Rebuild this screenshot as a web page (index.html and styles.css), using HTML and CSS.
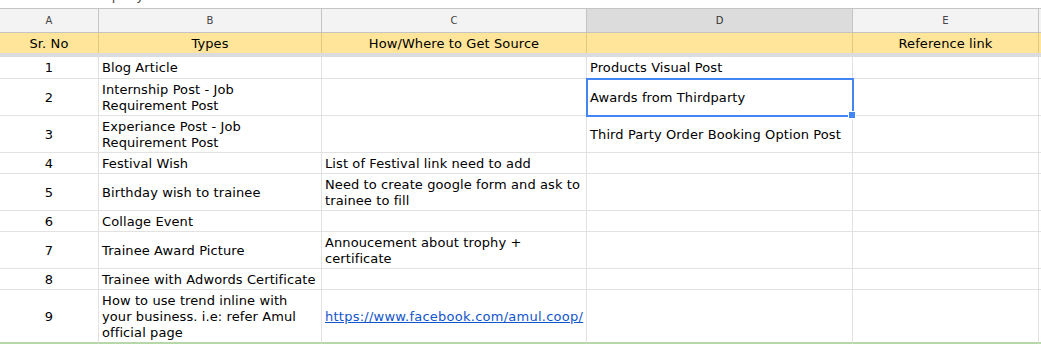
FILE: index.html
```html
<!doctype html>
<html>
  <head>
    <meta charset="UTF-8" />
    <title>Content Plan</title>
    <link rel="stylesheet" href="styles.css">
  </head>
  <body>
    <div class="title-strip"><span>Company</span></div>

    <div class="sheet">
      <!-- column letters -->
      <div class="col-head">A</div>
      <div class="col-head">B</div>
      <div class="col-head">C</div>
      <div class="col-head active">D</div>
      <div class="col-head">E</div>
      <div class="col-head last"></div>

      <!-- frozen header row -->
      <div class="hd">Sr. No</div>
      <div class="hd">Types</div>
      <div class="hd">How/Where to Get Source</div>
      <div class="hd"></div>
      <div class="hd">Reference link</div>
      <div class="hd last"></div>

      <div class="freeze"></div>

      <div class="c num r1">1</div>
      <div class="c r1">Blog Article</div>
      <div class="c r1"></div>
      <div class="c r1">Products Visual Post</div>
      <div class="c r1"></div>
      <div class="c r1 last"></div>

      <div class="c num r2">2</div>
      <div class="c r2">Internship Post - Job Requirement Post</div>
      <div class="c r2"></div>
      <div class="c r2 selected">Awards from Thirdparty<span class="handle"></span></div>
      <div class="c r2"></div>
      <div class="c r2 last"></div>

      <div class="c num r2">3</div>
      <div class="c r2">Experiance Post - Job Requirement Post</div>
      <div class="c r2"></div>
      <div class="c r2">Third Party Order Booking Option Post</div>
      <div class="c r2"></div>
      <div class="c r2 last"></div>

      <div class="c num r0">4</div>
      <div class="c r0">Festival Wish</div>
      <div class="c r0">List of Festival link need to add</div>
      <div class="c r0"></div>
      <div class="c r0"></div>
      <div class="c r0 last"></div>

      <div class="c num r2">5</div>
      <div class="c r2">Birthday wish to trainee</div>
      <div class="c r2">Need to create google form and ask to trainee to fill</div>
      <div class="c r2"></div>
      <div class="c r2"></div>
      <div class="c r2 last"></div>

      <div class="c num r0">6</div>
      <div class="c r0">Collage Event</div>
      <div class="c r0"></div>
      <div class="c r0"></div>
      <div class="c r0"></div>
      <div class="c r0 last"></div>

      <div class="c num r2">7</div>
      <div class="c r2">Trainee Award Picture</div>
      <div class="c r2">Annoucement about trophy + certificate</div>
      <div class="c r2"></div>
      <div class="c r2"></div>
      <div class="c r2 last"></div>

      <div class="c num r0">8</div>
      <div class="c r0">Trainee with Adwords Certificate</div>
      <div class="c r0"></div>
      <div class="c r0"></div>
      <div class="c r0"></div>
      <div class="c r0 last"></div>

      <div class="c num r3 end">9</div>
      <div class="c r3 end">How to use trend inline with your business. i.e: refer Amul official page</div>
      <div class="c r3 end"><a href="#">https://www.facebook.com/amul.coop/</a></div>
      <div class="c r3 end"></div>
      <div class="c r3 end"></div>
      <div class="c r3 end last"></div>
    </div>
  </body>
</html>
```

FILE: styles.css
```css
html,
body {
  margin: 0;
  background: #fff;
  font-family: "DejaVu Sans", Verdana, sans-serif;
  color: #000;
}
.title-strip {
  height: 8px;
  overflow: hidden;
  padding-left: 82px;
  font-size: 13px;
  color: #444;
}
.title-strip span {
  display: block;
  margin-top: -11px;
  line-height: 14px;
}
.sheet {
  display: grid;
  grid-template-columns: 99px 223px 265px 266px 186px 1fr;
  border-top: 1px solid #c4c4c4;
}
.col-head {
  height: 23px;
  background: #f3f3f3;
  border-right: 1px solid #c4c4c4;
  border-bottom: 1px solid #c4c4c4;
  font-size: 10px;
  color: #444;
  display: flex;
  align-items: center;
  justify-content: center;
}
.col-head.active {
  background: #dcdcdc;
  color: #333;
}
.hd {
  height: 20px;
  background: #ffe599;
  border-right: 1px solid #e3c97f;
  font-size: 13px;
  letter-spacing: 0.1px;
  display: flex;
  align-items: center;
  justify-content: center;
  padding-top: 1px;
  box-sizing: border-box;
}
.last {
  border-right: none;
}
.freeze {
  grid-column: 1 / -1;
  height: 4px;
  background: #dadce0;
}
.c {
  border-right: 1px solid #e2e2e2;
  border-bottom: 1px solid #e2e2e2;
  padding: 1px 3px 0;
  font-size: 13px;
  letter-spacing: 0.1px;
  line-height: 16px;
  display: flex;
  align-items: center;
  position: relative;
  box-sizing: border-box;
}
.c.num {
  justify-content: center;
}
.r0 { height: 21px; }
.r1 { height: 22px; }
.r2 { height: 37px; }
.r3 { height: 54px; }
.c.end {
  border-bottom: 2px solid #b6d7a8;
}
.c a {
  color: #1155cc;
  letter-spacing: 0.25px;
}
.selected {
  outline: 2px solid #4285f4;
  outline-offset: -1px;
  z-index: 2;
}
.handle {
  position: absolute;
  right: -4px;
  bottom: -4px;
  width: 6px;
  height: 6px;
  background: #4285f4;
  border: 1px solid #fff;
}
```
